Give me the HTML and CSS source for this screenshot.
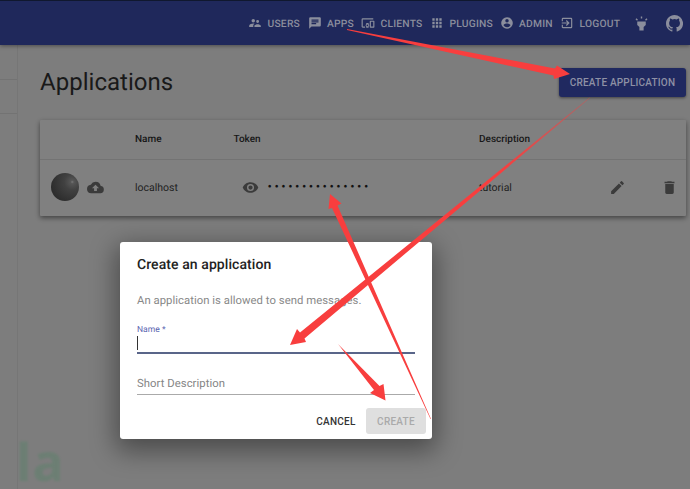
FILE: index.html
```html
<!DOCTYPE html>
<html lang="en">
<head>
<meta charset="utf-8">
<title>Applications</title>
<link rel="stylesheet" href="styles.css">
</head>
<body>
<header class="navbar">
  <a class="nav-link"><svg viewBox="0 0 24 24"><path d="M16.5 12a2.5 2.5 0 1 0 0-5 2.5 2.5 0 0 0 0 5zM9 11a3 3 0 1 0 0-6 3 3 0 0 0 0 6zm7.5 3c-1.8 0-5.5.9-5.5 2.7V19h11v-2.300c0-1.800-3.700-2.700-5.500-2.700zM9 13c-2.300 0-7 1.200-7 3.500V19h7v-2.300c0-.800.300-2.300 2.400-3.500A12 12 0 0 0 9 13z"/></svg><span>USERS</span></a>
  <a class="nav-link"><svg viewBox="0 0 24 24"><path d="M20 2H4a2 2 0 0 0-2 2v18l4-4h14a2 2 0 0 0 2-2V4a2 2 0 0 0-2-2zM6 9h12v2H6V9zm8 5H6v-2h8v2zm4-6H6V6h12v2z"/></svg><span>APPS</span></a>
  <a class="nav-link"><svg viewBox="0 0 24 24"><path d="M3 6h18V4H3a2 2 0 0 0-2 2v12c0 1.100.9 2 2 2h4v-2H3V6zm10 6H9v1.780a3 3 0 0 0 0 4.440V20h4v-1.780a3 3 0 0 0 0-4.440V12zm-2 5.500a1.500 1.500 0 1 1 0-3 1.500 1.500 0 0 1 0 3zM22 8h-6c-.5 0-1 .5-1 1v10c0 .5.5 1 1 1h6c.5 0 1-.5 1-1V9c0-.5-.5-1-1-1zm-1 10h-4v-8h4v8z"/></svg><span>CLIENTS</span></a>
  <a class="nav-link"><svg viewBox="0 0 24 24"><path d="M4 8h4V4H4v4zm6 12h4v-4h-4v4zm-6 0h4v-4H4v4zm0-6h4v-4H4v4zm6 0h4v-4h-4v4zm6-10v4h4V4h-4zm-6 4h4V4h-4v4zm6 6h4v-4h-4v4zm0 6h4v-4h-4v4z"/></svg><span>PLUGINS</span></a>
  <a class="nav-link"><svg viewBox="0 0 24 24"><path d="M12 2a10 10 0 1 0 0 20 10 10 0 0 0 0-20zm0 3a3 3 0 1 1 0 6 3 3 0 0 1 0-6zm0 14.200a7.200 7.200 0 0 1-6-3.220c.03-1.990 4-3.080 6-3.080s5.970 1.090 6 3.080a7.200 7.200 0 0 1-6 3.220z"/></svg><span>ADMIN</span></a>
  <a class="nav-link"><svg viewBox="0 0 24 24"><path d="M10.090 15.590 11.500 17l5-5-5-5-1.410 1.410L12.670 11H3v2h9.670l-2.580 2.590zM19 3H5a2 2 0 0 0-2 2v4h2V5h14v14H5v-4H3v4c0 1.100.9 2 2 2h14a2 2 0 0 0 2-2V5a2 2 0 0 0-2-2z"/></svg><span>LOGOUT</span></a>
  <a class="nav-icon"><svg viewBox="0 0 24 24"><path d="M6 14l3 3v5h6v-5l3-3V9H6v5zm5-12h2v3h-2V2zM3.500 5.880l1.410-1.410 2.120 2.120L5.620 8 3.500 5.880zm13.460.71 2.120-2.120 1.410 1.410L18.380 8l-1.420-1.410z"/></svg></a>
  <a class="nav-icon"><svg viewBox="0 0 16 16"><path d="M8 0C3.580 0 0 3.580 0 8c0 3.540 2.290 6.530 5.470 7.590.4.070.550-.170.550-.380v-1.490c-2.010.370-2.530-.490-2.690-.940-.090-.230-.480-.940-.820-1.130-.280-.150-.680-.520-.010-.530.630-.010 1.080.580 1.230.820.720 1.210 1.870.870 2.330.660.070-.520.280-.870.510-1.070-1.780-.200-3.640-.890-3.640-3.950 0-.870.310-1.590.820-2.150-.080-.200-.360-1.020.080-2.120 0 0 .670-.210 2.200.820a7.600 7.600 0 0 1 4 0c1.530-1.040 2.200-.820 2.200-.820.440 1.100.160 1.920.080 2.120.510.560.820 1.270.820 2.150 0 3.070-1.870 3.750-3.650 3.950.290.250.540.730.540 1.480v2.200c0 .210.150.460.550.380A8 8 0 0 0 8 0z"/></svg></a>
</header>
<div class="layout">
  <aside class="sidebar"><div></div><div></div></aside>
  <main class="content">
    <div class="heading"><h1>Applications</h1><button class="create-app">CREATE APPLICATION</button></div>
    <section class="table">
      <div class="row head"><span></span><span>Name</span><span>Token</span><span>Description</span><span></span><span></span></div>
      <div class="row">
        <span class="picture"><i class="avatar"></i><svg viewBox="0 0 24 24"><path d="M19.350 10.040A7.490 7.490 0 0 0 12 4a7.500 7.500 0 0 0-6.650 4.040A6 6 0 0 0 6 20h13a5 5 0 0 0 .35-9.960zM14 13v4h-4v-4H7l5-5 5 5h-3z"/></svg></span>
        <span>localhost</span>
        <span class="token"><svg viewBox="0 0 24 24"><path d="M12 4.500C7 4.500 2.730 7.610 1 12c1.730 4.390 6 7.500 11 7.500s9.270-3.110 11-7.500c-1.730-4.390-6-7.500-11-7.500zM12 17a5 5 0 1 1 0-10 5 5 0 0 1 0 10zm0-8a3 3 0 1 0 0 6 3 3 0 0 0 0-6z"/></svg><span class="dots">•••••••••••••••</span></span>
        <span>tutorial</span>
        <svg viewBox="0 0 24 24"><path d="M3 17.250V21h3.750L17.810 9.940l-3.750-3.750L3 17.250zM20.710 7.040a1 1 0 0 0 0-1.410l-2.340-2.340a1 1 0 0 0-1.410 0l-1.830 1.830 3.750 3.750 1.830-1.830z"/></svg>
        <svg viewBox="0 0 24 24"><path d="M6 19c0 1.100.9 2 2 2h8a2 2 0 0 0 2-2V7H6v12zM19 4h-3.500l-1-1h-5l-1 1H5v2h14V4z"/></svg>
      </div>
    </section>
  </main>
</div>
<div class="watermark">la</div>
<section class="dialog">
  <h2>Create an application</h2>
  <p>An application is allowed to send messages.</p>
  <div class="field focused"><label>Name *</label><div class="caret"></div></div>
  <div class="field">Short Description</div>
  <div class="actions"><button>CANCEL</button><button class="disabled">CREATE</button></div>
</section>
<svg class="arrows" viewBox="0 0 690 489">
  <defs><linearGradient id="fade" gradientUnits="userSpaceOnUse" x1="590" y1="98" x2="500" y2="172"><stop offset="0" stop-color="#f83e3e" stop-opacity=".35"/><stop offset="1" stop-color="#f83e3e"/></linearGradient></defs>
  <path d="M347 29 347 30 553.500 75.500 554 79 570 74 557 65.500 555 68.500Z"/>
  <path fill="url(#fade)" d="M590 98 304.500 338.500 306 342 290 345 297 329 300 332.500 589.500 97.500Z"/>
  <path d="M431 419 337.500 205.500 341.500 203.500 330 194 328.500 209 332 208 430.500 419Z"/>
  <path d="M338 344 379.500 386 383.500 384 385.500 400.500 370 393 374 390Z"/>
</svg>
</body>
</html>
```
FILE: styles.css
```css
* { box-sizing: border-box; }
body { margin: 0; width: 690px; height: 489px; overflow: hidden; background: #7d7d7d; color: #191919; font: 10.500px Roboto, sans-serif; text-rendering: geometricPrecision; }
svg { display: block; fill: currentColor; }
h1, h2, p { margin: 0; font-weight: 400; }
button { border: 0; padding: 0; font: 500 10px Roboto, sans-serif; letter-spacing: .26px; border-radius: 3px; }
.navbar { height: 45px; padding-left: 248px; display: grid; grid-template-columns: 59.500px 53.500px 69px 69.500px 60.500px 73px 33px 20px; align-items: center; background: #1f285b; border-top: 1px solid #10182f; color: #8b8e9d; box-shadow: 0 1px 4px #0006; position: relative; }
.nav-link { display: flex; align-items: center; gap: 5.500px; font-size: 10.300px; font-weight: 500; letter-spacing: .2px; white-space: nowrap; }
.nav-link svg { width: 14px; height: 14px; flex: none; }
.nav-icon svg { width: 17px; height: 17px; }
.layout { display: flex; height: 444px; }
.sidebar { width: 18px; padding-top: 1px; border-right: 1px solid #767676; }
.sidebar div { height: 34px; border-bottom: 1px solid #737373; }
.content { flex: 1; padding: 23px 4px 0 22px; }
.heading { display: flex; justify-content: space-between; align-items: flex-start; height: 52px; }
h1 { font-size: 24px; line-height: 29px; letter-spacing: .03px; }
.create-app { width: 127px; height: 29px; background: #202960; color: #8e91a5; box-shadow: 0 1px 3px #0007; letter-spacing: .2px; }
.table { height: 96px; background: #808080; border-radius: 1px; box-shadow: 0 2px 5px #0007; }
.row { display: grid; grid-template-columns: 95px 98.500px 245.500px 130px 52px 1fr; align-items: center; height: 54px; color: #222; }
.row.head { height: 40px; border-bottom: 1px solid #737373; font-size: 10px; font-weight: 500; color: #171717; padding-bottom: 1px; }
.row svg { width: 17px; height: 17px; color: #3b3b3b; }
.picture { display: flex; align-items: center; gap: 8px; padding-left: 11px; }
.avatar { width: 28px; height: 28px; border-radius: 50%; background: radial-gradient(circle at 76% 32%, #777 0, #555 6%, #414141 28%, #2d2d2d 75%); }
.token { display: flex; align-items: center; gap: 9px; padding-left: 8px; }
.dots { font-size: 13px; letter-spacing: 2.500px; color: #111; }
.watermark { position: absolute; left: 16px; top: 435px; font: 700 52px/54px "Noto Sans", sans-serif; letter-spacing: 1px; color: #64806f; opacity: .65; filter: blur(1px); }
.dialog { position: absolute; left: 120px; top: 242px; width: 312px; height: 197px; padding: 14px 17px 6px; background: #fff; border-radius: 3px; box-shadow: 0 8px 26px 4px #0006; }
h2 { font-size: 14px; line-height: 18px; font-weight: 500; letter-spacing: .08px; color: #222; }
p { margin-top: 19px; font-size: 11.300px; line-height: 16px; letter-spacing: .04px; color: #888; }
.field { height: 41px; padding-top: 23px; border-bottom: 1px solid #aaa; color: #858585; font-size: 11.300px; line-height: 14px; letter-spacing: .05px; }
.field.focused { height: 30px; margin-top: 15px; padding-top: 0; border-bottom: 2px solid #596589; }
label { display: block; height: 13px; line-height: 12px; font-size: 8.500px; color: #5964b0; }
.caret { width: 1px; height: 14px; margin-top: -1px; background: #333; }
.actions { display: flex; justify-content: flex-end; margin: 13px -11px 0; }
.actions button { width: 60px; height: 26px; background: none; color: #333; }
.actions .disabled { background: #dfdfdf; color: #aaa; }
.arrows { position: absolute; inset: 0; width: 690px; height: 489px; fill: #f83e3e; }
```
